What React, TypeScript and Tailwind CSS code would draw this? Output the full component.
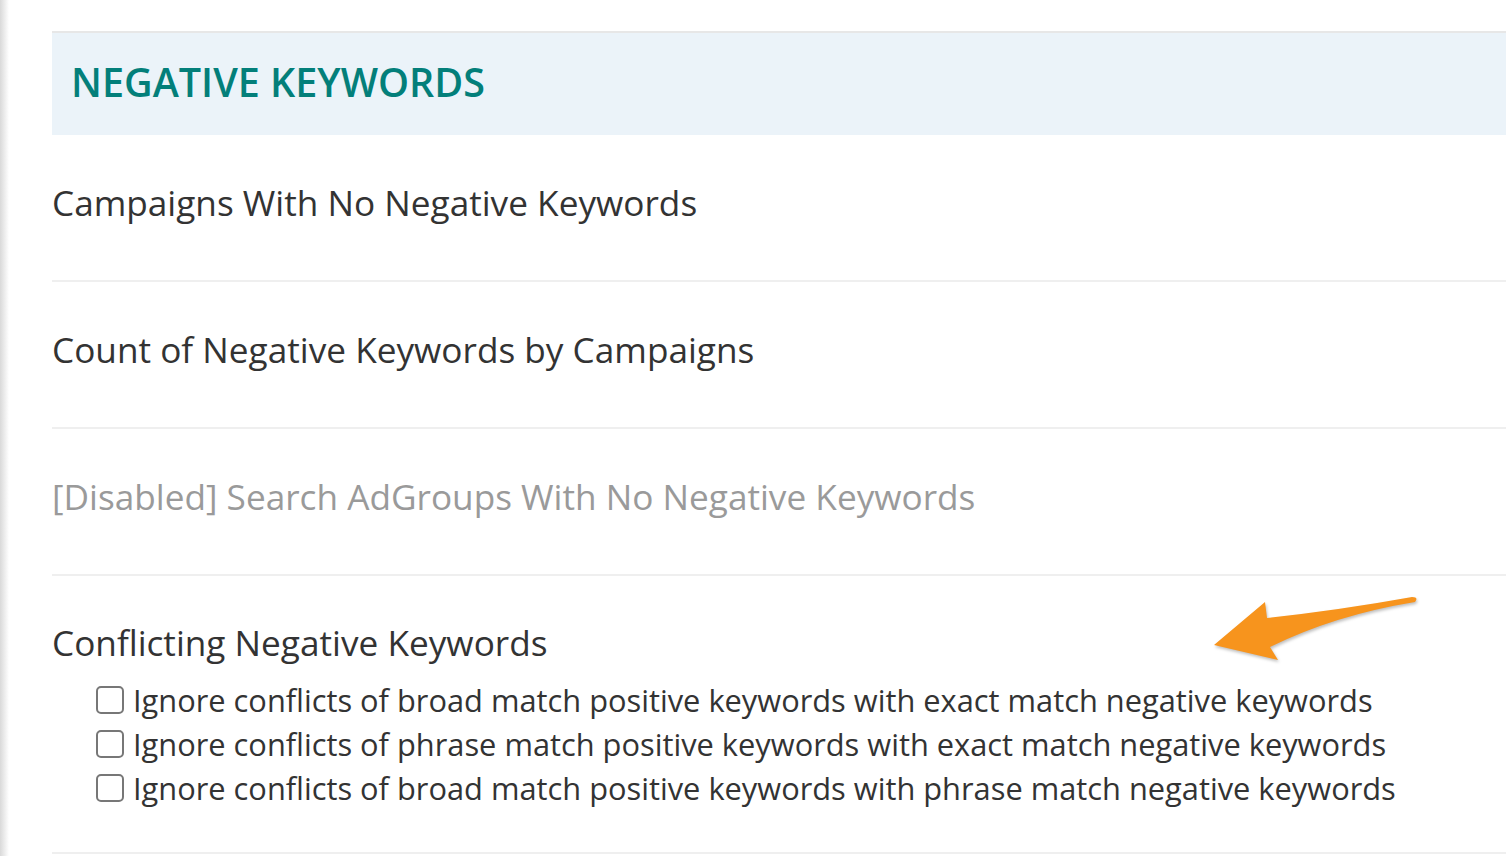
import React from "react";

const rows = [
  { text: "Campaigns With No Negative Keywords", disabled: false },
  { text: "Count of Negative Keywords by Campaigns", disabled: false },
  { text: "[Disabled] Search AdGroups With No Negative Keywords", disabled: true },
];

const options = [
  "Ignore conflicts of broad match positive keywords with exact match negative keywords",
  "Ignore conflicts of phrase match positive keywords with exact match negative keywords",
  "Ignore conflicts of broad match positive keywords with phrase match negative keywords",
];

function Arrow() {
  return (
    <svg
      className="absolute left-[1200px] top-[590px] drop-shadow-[1px_2px_1.5px_rgba(0,0,0,0.25)]"
      width="230"
      height="80"
      viewBox="0 0 230 80"
    >
      <path
        d="M14,55 L65,12 L67,28 Q140,20 212,7 Q219,7 215,12 Q135,25 70,57 L78,70 Z"
        fill="#f7941d"
      />
    </svg>
  );
}

export default function App() {
  return (
    <div
      className="relative min-h-screen bg-white flex"
      style={{ fontFamily: '"Open Sans", "Noto Sans", sans-serif' }}
    >
      <div className="w-[9px] shrink-0 bg-linear-to-r from-[#d9d9d9] via-[#ececec] to-white" />
      <div className="flex-1 pl-[43px] pt-[31px]">
        <div className="h-[104px] border-t-2 border-[#e7e7e7] bg-[#ebf3f9] flex items-center pl-[19px]">
          <h1 className="text-[39.5px] font-semibold text-[#037f7a] leading-none pb-[2px]">
            NEGATIVE KEYWORDS
          </h1>
        </div>
        {rows.map((r) => (
          <div
            key={r.text}
            className="h-[147px] border-b-2 border-[#efefef] flex items-center pb-[12px]"
          >
            <span
              className={`text-[35.2px] leading-[46px] ${
                r.disabled ? "text-[#9a9a9a]" : "text-[#333333]"
              }`}
            >
              {r.text}
            </span>
          </div>
        ))}
        <div className="border-b-2 border-[#efefef] pt-[43px] pb-[42px]">
          <div className="text-[35.2px] leading-[46px] text-[#333333]">
            Conflicting Negative Keywords
          </div>
          <div className="mt-[13px] pl-[44px] flex flex-col">
            {options.map((o) => (
              <label key={o} className="flex items-center h-[44px] gap-[9px]">
                <span className="w-[28px] h-[28px] rounded-[5px] border-2 border-[#777777] bg-white shrink-0" />
                <span className="text-[30.8px] leading-[44px] text-[#333333] whitespace-nowrap">
                  {o}
                </span>
              </label>
            ))}
          </div>
        </div>
      </div>
      <Arrow />
    </div>
  );
}
